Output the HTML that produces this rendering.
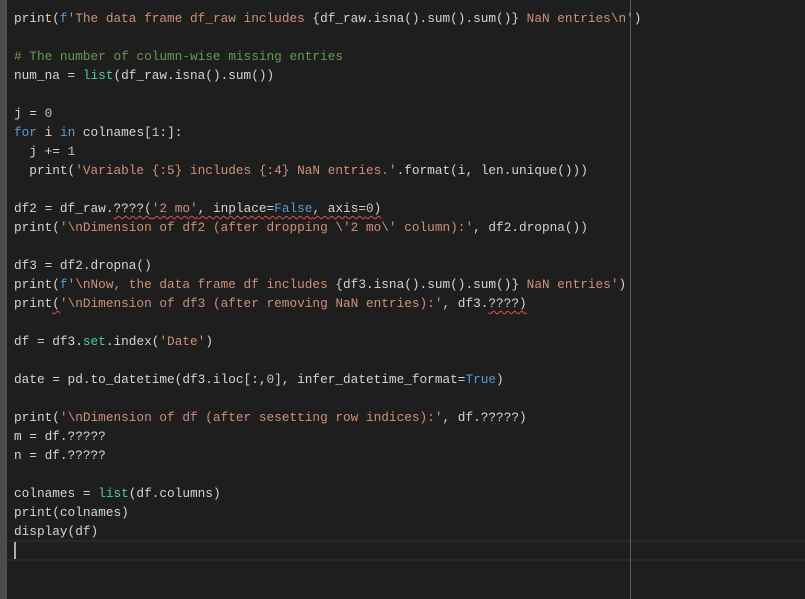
<!DOCTYPE html>
<html><head><meta charset="utf-8"><style>
html,body{margin:0;padding:0;background:#1e1e1e;width:805px;height:599px;overflow:hidden}
.g{position:absolute;left:0;top:0;width:7px;height:599px;background:#4b4b4b}
.r{position:absolute;left:630px;top:0;width:1px;height:599px;background:#5a5a5a}
.cur{position:absolute;left:7px;right:0;top:540px;height:17px;border-top:2px solid #282828;border-bottom:2px solid #282828}
.caret{position:absolute;left:14px;top:542px;width:2px;height:17px;background:#aeafad}
pre{position:absolute;left:14px;top:9px;margin:0;font-family:"Liberation Mono",monospace;font-size:12.75px;line-height:19px;color:#d4d4d4}
.s{color:#ce9178}.c{color:#6a9955}.k{color:#569cd6}.t{color:#4ec9b0}.n{color:#b5cea8}
.w{text-decoration:underline wavy #e05050;text-decoration-thickness:1px;text-underline-offset:3px}
</style></head><body>
<div class="g"></div><div class="cur"></div><div class="r"></div><div class="caret"></div>
<pre>print(<span class="k">f</span><span class="s">'The data frame df_raw includes </span>{df_raw.isna().sum().sum()}<span class="s"> NaN entries\n'</span>)

<span class="c"># The number of column-wise missing entries</span>
num_na = <span class="t">list</span>(df_raw.isna().sum())

j = <span class="n">0</span>
<span class="k">for</span> i <span class="k">in</span> colnames[<span class="n">1</span>:]:
  j += <span class="n">1</span>
  print(<span class="s">'Variable {:5} includes {:4} NaN entries.'</span>.format(i, len.unique()))

df2 = df_raw.<span class="w">????(<span class="s">'2 mo'</span>, inplace=<span class="k">False</span>, axis=<span class="n">0</span>)</span>
print(<span class="s">'\nDimension of df2 (after dropping \'2 mo\' column):'</span>, df2.dropna())

df3 = df2.dropna()
print(<span class="k">f</span><span class="s">'\nNow, the data frame df includes </span>{df3.isna().sum().sum()}<span class="s"> NaN entries'</span>)
print<span class="w">(</span><span class="s">'\nDimension of df3 (after removing NaN entries):'</span>, df3.<span class="w">????)</span>

df = df3.<span class="t">set</span>.index(<span class="s">'Date'</span>)

date = pd.to_datetime(df3.iloc[:,<span class="n">0</span>], infer_datetime_format=<span class="k">True</span>)

print(<span class="s">'\nDimension of df (after sesetting row indices):'</span>, df.?????)
m = df.?????
n = df.?????

colnames = <span class="t">list</span>(df.columns)
print(colnames)
display(df)
</pre>
</body></html>
